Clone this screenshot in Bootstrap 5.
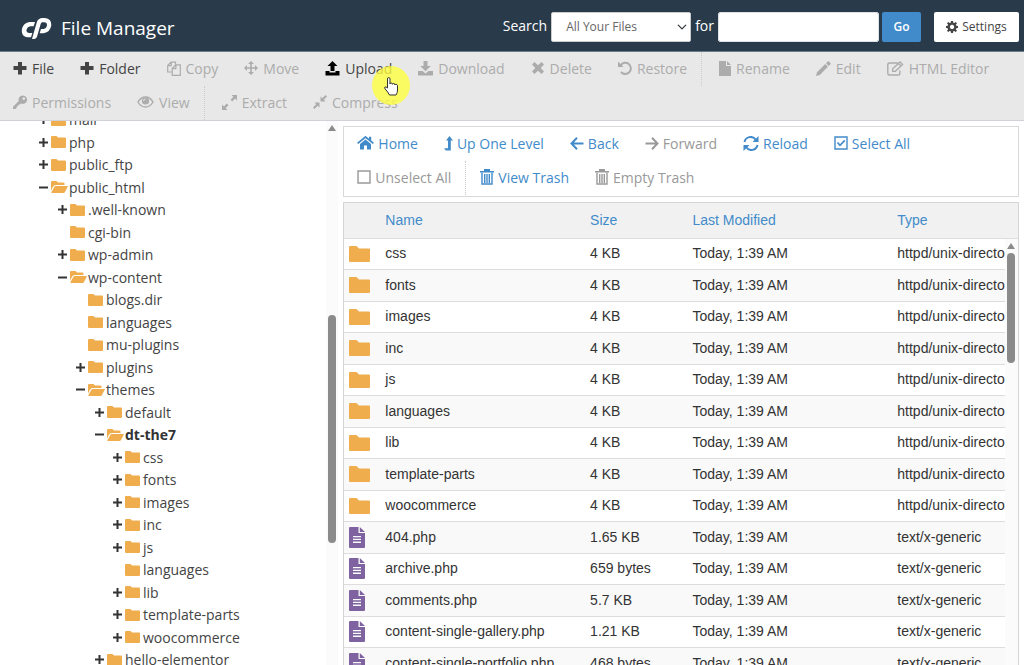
<!DOCTYPE html>
<html lang="en">
<head>
<meta charset="utf-8">
<meta name="viewport" content="width=device-width, initial-scale=1">
<title>File Manager</title>
<link href="https://cdn.jsdelivr.net/npm/bootstrap@5.3.0/dist/css/bootstrap.min.css" rel="stylesheet">
<style>
body{font-family:"Open Sans",sans-serif;font-size:14px;line-height:1.5;color:#444;background:#fff}
svg{fill:currentColor;flex:none}
.topbar{background:#293a4a;border-bottom:1px solid #6d7c8b;height:52px;padding-right:5px;padding-left:21px}
.brand{padding-top:5px}
.brand span{font-size:19px;line-height:24px;color:#fff;margin-left:9px}
.topbar label{color:#fff;padding-bottom:3px}
.topbar form{padding-top:2px}
.topbar .form-select,.topbar .form-control,.topbar .btn{height:30px;font-size:12px;line-height:18px;border-radius:2px;padding:5px 10px}
.topbar .form-select{width:140px;color:#666;padding:5px 14px;background-position:right 3px center;background-size:10px 10px;border-color:#ccc}
.topbar .form-control{width:161px}
.topbar .go{background:#428bca;color:#fff;font-weight:600;width:39px;margin-left:3px}
.topbar .settings{background:#fff;color:#444;margin-left:13px;width:85px}
.tools button{border:0;background:none;padding:0 13px 2px;height:34px;display:flex;align-items:center;gap:4px;color:#444;white-space:nowrap}
.tools button:disabled{color:#aaa}
.tools .divided{border-left:1px dotted #ccc;margin-left:1px;padding-left:4px}
.maintools{background:#e8e8e8;border-bottom:1px solid #cfd3d8}
.maintools button{gap:5px}
.maintools button:disabled{color:#acacac}
.plain{color:#333}
.pane{padding:5px 5px 0 2px}
.navtools{border:1px solid #d9d9d9;padding-bottom:1px;margin-bottom:5px}
.navtools button{color:#428bca}
.navtools button:disabled{color:#999}
.navtools .divided{padding-left:1px}
.pointer{position:absolute;left:60px;top:14px;width:38px;height:39px;z-index:2;background:rgba(255,255,60,.78);border-radius:50%;pointer-events:none}
.hand{position:absolute;left:72px;top:25px;z-index:3;pointer-events:none}
.tree{margin-top:-13px}
.tree li{display:flex;align-items:center;white-space:nowrap;height:23px}
.tree li:nth-child(even){height:22px}
.tree li>svg:first-child{margin-right:3px;color:#333}
.tree .dir{margin-right:1px}
.leaf{padding-left:12px}
.dir{color:#f0ad4e}
.lv0{margin-left:39px}.lv1{margin-left:58px}.lv2{margin-left:76px}.lv3{margin-left:95px}.lv4{margin-left:113px}
.track{background:#fbfbfb;color:#8b8b8b}
.thumb{background:#8b8b8b;border-radius:4px;width:8px}
.side .track{width:12px;margin-right:3px}
.side .thumb{height:228px;margin-top:184px}
.listing{border:1px solid #d5d5d5;border-bottom:0}
.listing .track{position:absolute;right:0;top:36px;bottom:0;width:13px}
.listing .thumb{height:110px;margin-top:4px}
.files{font-family:"Liberation Sans",sans-serif;table-layout:fixed;color:#333}
.files td,.files th{padding:0 6px;height:31px;white-space:nowrap;overflow:hidden;border-bottom:1px solid #ddd}
.files tbody tr:nth-child(even) td{height:32px}
.files td:first-child{padding-left:5px;padding-right:0;line-height:1}
.files th{background:#f1f1f1;font-weight:400;height:35px}
.files th a{color:#428bca;text-decoration:none}
.files tbody tr:nth-child(even){background:#f9f9f9}
.files .doc{color:#7f62a0}
.c-icon{width:35px}.c-wide{width:30.4%}.c-size{width:15.2%}
</style>
</head>
<body class="vh-100 overflow-hidden d-flex flex-column">
<svg class="d-none">
<symbol id="plus" viewBox="0 0 14 14"><path d="M5 1h4v4h4.500v4H9v4.500H5V9H.5V5H5z"/></symbol>
<symbol id="copy" viewBox="0 0 14 15"><path fill="none" stroke="currentColor" stroke-width="1.200" d="M5 11H.7V4.500L4 1.100h4.500V4M4.200 1.200v3.500H.8M8.800 3.900h4.500v10.400H5.200V7.600zM8.900 4v3.700H5.300"/></symbol>
<symbol id="move" viewBox="0 0 14 14"><path d="M7 0l3 3H7.800v3.200H11V4l3 3-3 3V7.800H7.800V11H10l-3 3-3-3h2.200V7.800H3V10L0 7l3-3v2.200h3.200V3H4z"/></symbol>
<symbol id="upload" viewBox="0 0 14 15"><path d="M7 0l5 5H9v5H5V5H2zM0 10h4v1.500h6V10h4v4.500H0z"/></symbol>
<symbol id="download" viewBox="0 0 15 15"><path d="M5.500 0h4v5h3.300L7.500 10.300 2.200 5h3.300zM0 10h4.500l3 2.500 3-2.500H15v4.500H0z"/></symbol>
<symbol id="times" viewBox="0 0 12 12"><path d="M2.500 0L6 3.300 9.500 0 12 2.500 8.700 6 12 9.500 9.500 12 6 8.700 2.500 12 0 9.500 3.300 6 0 2.500z"/></symbol>
<symbol id="undo" viewBox="0 0 14 14"><path fill="none" stroke="currentColor" stroke-width="2" d="M2.600 4.200A5.600 5.600 0 1 1 3 11"/><path d="M0 .5V6h5.500z"/></symbol>
<symbol id="file" viewBox="0 0 12 15"><path d="M0 0h7v5h5v10H0zM8 0l4 4H8z"/></symbol>
<symbol id="pencil" viewBox="0 0 15 15"><path d="M10 2.300L12.300 0 15 2.700 12.700 5zM9.200 3.100l2.700 2.700L3.800 14 0 15l1-3.800z"/></symbol>
<symbol id="pensquare" viewBox="0 0 17 15"><path fill="none" stroke="currentColor" stroke-width="1.400" d="M11 2H2.500Q.8 2 .8 3.700v8.500Q.8 14 2.500 14h8.700q1.700 0 1.700-1.800V9.500"/><path fill="none" stroke="currentColor" stroke-width="1.300" d="M5.700 10.300V7.700L13 .9l2.600 2.600-7.300 6.800zM11.500 2.500l2.500 2.500"/></symbol>
<symbol id="key" viewBox="0 0 15 15"><path fill-rule="evenodd" d="M10.500 0a4.500 4.500 0 1 1-2 8.500L7 10H5.500v1.500H4V13l-1.500 1.500H0V12l6.200-6A4.500 4.500 0 0 1 10.500 0zm1 2a1.400 1.400 0 1 0 .1 0z"/></symbol>
<symbol id="eye" viewBox="0 0 17 12"><path fill="none" stroke="currentColor" stroke-width="1.400" d="M.9 6Q4 1 8.500 1t7.600 5Q13 11 8.500 11T.9 6z"/><circle cx="8.500" cy="5" r="3.600"/><path stroke="#e8e8e8" fill="none" d="M6.500 5q0-2 2-2"/></symbol>
<symbol id="expand" viewBox="0 0 15 15"><path d="M9.500 0H15v5.500l-1.900-1.900-2.900 2.900-1.700-1.700 2.900-2.900zM0 15V9.500l1.900 1.900 2.900-2.900 1.700 1.700-2.900 2.900L5.500 15z"/></symbol>
<symbol id="compress" viewBox="0 0 14 14"><path d="M7.500 6.500V1.500l1.800 1.700L12.500 0 14 1.500l-3.200 3.200 1.700 1.800zM6.500 7.500v5l-1.800-1.700L1.500 14 0 12.500l3.200-3.200-1.700-1.800z"/></symbol>
<symbol id="cog" viewBox="0 0 12 12"><path fill-rule="evenodd" d="M5 0h2l.3 1.700 1 .4L9.800 1 11 2.200 9.900 3.700l.4 1L12 5v2l-1.700.3-.4 1L11 9.800 9.800 11l-1.500-1.100-1 .4L7 12H5l-.3-1.700-1-.4L2.200 11 1 9.800l1.100-1.500-.4-1L0 7V5l1.700-.3.4-1L1 2.200 2.200 1l1.500 1.100 1-.4zM6 3.800a2.200 2.200 0 1 0 .1 0z"/></symbol>
<symbol id="home" viewBox="0 0 17 14"><path d="M8.500 3.500L14 8v5.500H10V9.500H7v4H3V8z"/><path fill="none" stroke="currentColor" stroke-width="1.800" d="M.6 7.400L8.500 1l7.900 6.400"/><path d="M12 .7h2.200v4.500L12 3.500z"/></symbol>
<symbol id="levelup" viewBox="0 0 9 15"><path d="M5.500 0L9 4.500H6.800V14.500H1.800L0 12.300h4V4.500H2z"/></symbol>
<symbol id="left" viewBox="0 0 14 13"><path fill="none" stroke="currentColor" stroke-width="2" d="M7 .8L1.500 6.500 7 12.200M1.500 6.500H13.500"/></symbol>
<symbol id="right" viewBox="0 0 14 13"><path fill="none" stroke="currentColor" stroke-width="2" d="M7 .8l5.500 5.700L7 12.200M12.500 6.500H.5"/></symbol>
<symbol id="reload" viewBox="0 0 16 15"><path fill="none" stroke="currentColor" stroke-width="2" d="M1.500 6A6.200 6.200 0 0 1 12.700 3.700M14.500 9A6.200 6.200 0 0 1 3.300 11.300"/><path d="M15.500 0v6h-6zM.5 15V9h6z"/></symbol>
<symbol id="checked" viewBox="0 0 14 14"><path fill="none" stroke="currentColor" stroke-width="1.400" d="M1 1h12v12H1z"/><path fill="none" stroke="currentColor" stroke-width="1.700" d="M3.500 6.500L6 9.300l4.800-5"/></symbol>
<symbol id="unchecked" viewBox="0 0 14 14"><path fill="none" stroke="currentColor" stroke-width="1.400" d="M1 1h12v12H1z"/></symbol>
<symbol id="trash" viewBox="0 0 14 16"><path d="M4 0h6v2h4v1.500H0V2h4z"/><path fill="none" stroke="currentColor" stroke-width="1.400" d="M2 3.500V15h10V3.500M4.700 5v9M7 5v9M9.300 5v9"/></symbol>
<symbol id="more" viewBox="0 0 9 9"><path d="M3.500 0h2v3.500H9v2H5.500V9h-2V5.500H0v-2h3.500z"/></symbol>
<symbol id="less" viewBox="0 0 9 9"><path d="M0 3.500h9v2H0z"/></symbol>
<symbol id="folder" viewBox="0 0 17 12"><path d="M1 0h4.500l1.500 1.500h7q1 0 1 1V11q0 1-1 1H1q-1 0-1-1V1q0-1 1-1z"/></symbol>
<symbol id="open" viewBox="0 0 17 12"><path d="M0 9.500V1q0-1 1-1h4.500L7 1.500h5.500q1 0 1 1V4H4.500Q3 4 2.200 5.500zM.2 11.500L3.300 6q.5-1 1.500-1H17l-3 6q-.5 1-1.500 1H.8z"/></symbol>
<symbol id="bigfolder" viewBox="0 0 21 16"><path d="M1 0h6.500l2.500 2.500h10q1 0 1 1V15q0 1-1 1H1q-1 0-1-1V1q0-1 1-1z"/></symbol>
<symbol id="doc" viewBox="0 0 16 21"><path fill-rule="evenodd" d="M1 0h8.500v6H16v14q0 1-1 1H1q-1 0-1-1V1q0-1 1-1zm3 9v1.300h8V9zm0 2.800v1.300h8v-1.300zm0 2.800v1.300h8v-1.300z"/><path d="M10.800 0L16 5h-5.200z"/></symbol>
<symbol id="up" viewBox="0 0 8 6"><path d="M4 0l4 6H0z"/></symbol>
</svg>

<header class="topbar d-flex align-items-center flex-shrink-0">
<div class="brand d-flex align-items-center">
<svg width="31" height="21" viewBox="0 0 93 63" fill="#fff"><path fill="#fff" d="M42 12H26Q8 14 3 32Q-1 54 18 58H30L34 45H24Q14 44 17 34Q19 26 28 25H38z"/><path fill="#fff" d="M33 63L47 14Q51 0 65 0H72Q92 2 91 22Q88 42 68 46H56L60 33H68Q77 31 78 22Q78 13 70 13H64Q60 14 59 18L48 56Q46 62 40 63z"/></svg>
<span>File Manager</span>
</div>
<form class="d-flex align-items-center ms-auto">
<label for="scope" class="me-1">Search</label>
<select id="scope" class="form-select"><option>All Your Files</option></select>
<label for="query" class="mx-1">for</label>
<input id="query" type="text" class="form-control">
<button type="button" class="btn go">Go</button>
<button type="button" class="btn settings d-flex align-items-center justify-content-center gap-1 px-0"><svg width="12" height="12"><use href="#cog"/></svg>Settings</button>
</form>
</header>

<nav class="tools maintools d-flex flex-wrap flex-shrink-0" aria-label="File actions">
<button><svg width="14" height="14"><use href="#plus"/></svg>File</button>
<button><svg width="14" height="14"><use href="#plus"/></svg>Folder</button>
<button disabled><svg width="14" height="15"><use href="#copy"/></svg>Copy</button>
<button disabled><svg width="14" height="14"><use href="#move"/></svg>Move</button>
<div class="position-relative">
<button class="plain"><svg width="15" height="15" color="#000"><use href="#upload"/></svg>Upload</button>
<span class="pointer"></span>
<svg class="hand" width="15" height="19" viewBox="0 0 15 19"><path fill="#fff" stroke="#333" d="M3.500 11V2q0-1.500 1.200-1.500T6 2v5q0-1 1.200-1t1.300 1.300q0-.8 1.200-.8T11 8q0-.7 1-.7t1.500 1.200V13q0 3-1.500 5H5.500Q4 15 1.200 12 0 10.500 1 10t2.500 1z"/></svg>
</div>
<button disabled><svg width="15" height="15"><use href="#download"/></svg>Download</button>
<button disabled><svg width="14" height="12"><use href="#times"/></svg>Delete</button>
<button disabled><svg width="14" height="14"><use href="#undo"/></svg>Restore</button>
<div class="divided"><button disabled><svg width="12" height="15"><use href="#file"/></svg>Rename</button></div>
<button disabled><svg width="15" height="15"><use href="#pencil"/></svg>Edit</button>
<button disabled><svg width="17" height="15"><use href="#pensquare"/></svg>HTML Editor</button>
<button disabled><svg width="14" height="15"><use href="#key"/></svg>Permissions</button>
<button disabled><svg width="17" height="12"><use href="#eye"/></svg>View</button>
<div class="divided"><button disabled><svg width="15" height="15"><use href="#expand"/></svg>Extract</button></div>
<button disabled><svg width="14" height="14"><use href="#compress"/></svg>Compress</button>
</nav>

<main class="row g-0 flex-fill overflow-hidden flex-nowrap">
<aside class="side col-4 d-flex h-100 overflow-hidden">
<ul class="tree list-unstyled mb-0 flex-fill">
<li class="lv0"><svg width="9" height="9"><use href="#more"/></svg><svg class="dir" width="17" height="12"><use href="#folder"/></svg>mail</li>
<li class="lv0"><svg width="9" height="9"><use href="#more"/></svg><svg class="dir" width="17" height="12"><use href="#folder"/></svg>php</li>
<li class="lv0"><svg width="9" height="9"><use href="#more"/></svg><svg class="dir" width="17" height="12"><use href="#folder"/></svg>public_ftp</li>
<li class="lv0"><svg width="9" height="9"><use href="#less"/></svg><svg class="dir" width="17" height="12"><use href="#open"/></svg>public_html</li>
<li class="lv1"><svg width="9" height="9"><use href="#more"/></svg><svg class="dir" width="17" height="12"><use href="#folder"/></svg>.well-known</li>
<li class="lv1"><span class="leaf"></span><svg class="dir" width="17" height="12"><use href="#folder"/></svg>cgi-bin</li>
<li class="lv1"><svg width="9" height="9"><use href="#more"/></svg><svg class="dir" width="17" height="12"><use href="#folder"/></svg>wp-admin</li>
<li class="lv1"><svg width="9" height="9"><use href="#less"/></svg><svg class="dir" width="17" height="12"><use href="#open"/></svg>wp-content</li>
<li class="lv2"><span class="leaf"></span><svg class="dir" width="17" height="12"><use href="#folder"/></svg>blogs.dir</li>
<li class="lv2"><span class="leaf"></span><svg class="dir" width="17" height="12"><use href="#folder"/></svg>languages</li>
<li class="lv2"><span class="leaf"></span><svg class="dir" width="17" height="12"><use href="#folder"/></svg>mu-plugins</li>
<li class="lv2"><svg width="9" height="9"><use href="#more"/></svg><svg class="dir" width="17" height="12"><use href="#folder"/></svg>plugins</li>
<li class="lv2"><svg width="9" height="9"><use href="#less"/></svg><svg class="dir" width="17" height="12"><use href="#open"/></svg>themes</li>
<li class="lv3"><svg width="9" height="9"><use href="#more"/></svg><svg class="dir" width="17" height="12"><use href="#folder"/></svg>default</li>
<li class="lv3 plain"><svg width="9" height="9"><use href="#less"/></svg><svg class="dir" width="17" height="12"><use href="#open"/></svg><b>dt-the7</b></li>
<li class="lv4"><svg width="9" height="9"><use href="#more"/></svg><svg class="dir" width="17" height="12"><use href="#folder"/></svg>css</li>
<li class="lv4"><svg width="9" height="9"><use href="#more"/></svg><svg class="dir" width="17" height="12"><use href="#folder"/></svg>fonts</li>
<li class="lv4"><svg width="9" height="9"><use href="#more"/></svg><svg class="dir" width="17" height="12"><use href="#folder"/></svg>images</li>
<li class="lv4"><svg width="9" height="9"><use href="#more"/></svg><svg class="dir" width="17" height="12"><use href="#folder"/></svg>inc</li>
<li class="lv4"><svg width="9" height="9"><use href="#more"/></svg><svg class="dir" width="17" height="12"><use href="#folder"/></svg>js</li>
<li class="lv4"><span class="leaf"></span><svg class="dir" width="17" height="12"><use href="#folder"/></svg>languages</li>
<li class="lv4"><svg width="9" height="9"><use href="#more"/></svg><svg class="dir" width="17" height="12"><use href="#folder"/></svg>lib</li>
<li class="lv4"><svg width="9" height="9"><use href="#more"/></svg><svg class="dir" width="17" height="12"><use href="#folder"/></svg>template-parts</li>
<li class="lv4"><svg width="9" height="9"><use href="#more"/></svg><svg class="dir" width="17" height="12"><use href="#folder"/></svg>woocommerce</li>
<li class="lv3"><svg width="9" height="9"><use href="#more"/></svg><svg class="dir" width="17" height="12"><use href="#folder"/></svg>hello-elementor</li>
</ul>
<div class="track d-flex flex-column align-items-center pt-1"><svg width="8" height="6"><use href="#up"/></svg><div class="thumb"></div></div>
</aside>

<section class="pane col-8 d-flex flex-column h-100 overflow-hidden">
<nav class="tools navtools d-flex flex-wrap flex-shrink-0" aria-label="Navigation">
<button><svg width="17" height="14"><use href="#home"/></svg>Home</button>
<button><svg width="9" height="15"><use href="#levelup"/></svg>Up One Level</button>
<button><svg width="14" height="13"><use href="#left"/></svg>Back</button>
<button disabled><svg width="14" height="13"><use href="#right"/></svg>Forward</button>
<button><svg width="16" height="15"><use href="#reload"/></svg>Reload</button>
<button class="me-5"><svg width="14" height="14"><use href="#checked"/></svg>Select All</button>
<button disabled><svg width="14" height="14"><use href="#unchecked"/></svg>Unselect All</button>
<div class="divided"><button><svg width="14" height="16"><use href="#trash"/></svg>View Trash</button></div>
<button disabled><svg width="14" height="16"><use href="#trash"/></svg>Empty Trash</button>
</nav>
<div class="listing position-relative flex-fill overflow-hidden">
<table class="files w-100">
<colgroup><col class="c-icon"><col class="c-wide"><col class="c-size"><col class="c-wide"><col></colgroup>
<thead><tr><th></th><th><a href="#">Name</a></th><th><a href="#">Size</a></th><th><a href="#">Last Modified</a></th><th><a href="#">Type</a></th></tr></thead>
<tbody>
<tr><td><svg class="dir" width="21" height="16"><use href="#bigfolder"/></svg></td><td>css</td><td>4 KB</td><td>Today, 1:39 AM</td><td>httpd/unix-directory</td></tr>
<tr><td><svg class="dir" width="21" height="16"><use href="#bigfolder"/></svg></td><td>fonts</td><td>4 KB</td><td>Today, 1:39 AM</td><td>httpd/unix-directory</td></tr>
<tr><td><svg class="dir" width="21" height="16"><use href="#bigfolder"/></svg></td><td>images</td><td>4 KB</td><td>Today, 1:39 AM</td><td>httpd/unix-directory</td></tr>
<tr><td><svg class="dir" width="21" height="16"><use href="#bigfolder"/></svg></td><td>inc</td><td>4 KB</td><td>Today, 1:39 AM</td><td>httpd/unix-directory</td></tr>
<tr><td><svg class="dir" width="21" height="16"><use href="#bigfolder"/></svg></td><td>js</td><td>4 KB</td><td>Today, 1:39 AM</td><td>httpd/unix-directory</td></tr>
<tr><td><svg class="dir" width="21" height="16"><use href="#bigfolder"/></svg></td><td>languages</td><td>4 KB</td><td>Today, 1:39 AM</td><td>httpd/unix-directory</td></tr>
<tr><td><svg class="dir" width="21" height="16"><use href="#bigfolder"/></svg></td><td>lib</td><td>4 KB</td><td>Today, 1:39 AM</td><td>httpd/unix-directory</td></tr>
<tr><td><svg class="dir" width="21" height="16"><use href="#bigfolder"/></svg></td><td>template-parts</td><td>4 KB</td><td>Today, 1:39 AM</td><td>httpd/unix-directory</td></tr>
<tr><td><svg class="dir" width="21" height="16"><use href="#bigfolder"/></svg></td><td>woocommerce</td><td>4 KB</td><td>Today, 1:39 AM</td><td>httpd/unix-directory</td></tr>
<tr><td><svg class="doc" width="16" height="21"><use href="#doc"/></svg></td><td>404.php</td><td>1.65 KB</td><td>Today, 1:39 AM</td><td>text/x-generic</td></tr>
<tr><td><svg class="doc" width="16" height="21"><use href="#doc"/></svg></td><td>archive.php</td><td>659 bytes</td><td>Today, 1:39 AM</td><td>text/x-generic</td></tr>
<tr><td><svg class="doc" width="16" height="21"><use href="#doc"/></svg></td><td>comments.php</td><td>5.7 KB</td><td>Today, 1:39 AM</td><td>text/x-generic</td></tr>
<tr><td><svg class="doc" width="16" height="21"><use href="#doc"/></svg></td><td>content-single-gallery.php</td><td>1.21 KB</td><td>Today, 1:39 AM</td><td>text/x-generic</td></tr>
<tr><td><svg class="doc" width="16" height="21"><use href="#doc"/></svg></td><td>content-single-portfolio.php</td><td>468 bytes</td><td>Today, 1:39 AM</td><td>text/x-generic</td></tr>
</tbody>
</table>
<div class="track d-flex flex-column align-items-center pt-1"><svg width="8" height="6"><use href="#up"/></svg><div class="thumb"></div></div>
</div>
</section>
</main>
<script src="https://cdn.jsdelivr.net/npm/bootstrap@5.3.0/dist/js/bootstrap.bundle.min.js"></script>
</body>
</html>
